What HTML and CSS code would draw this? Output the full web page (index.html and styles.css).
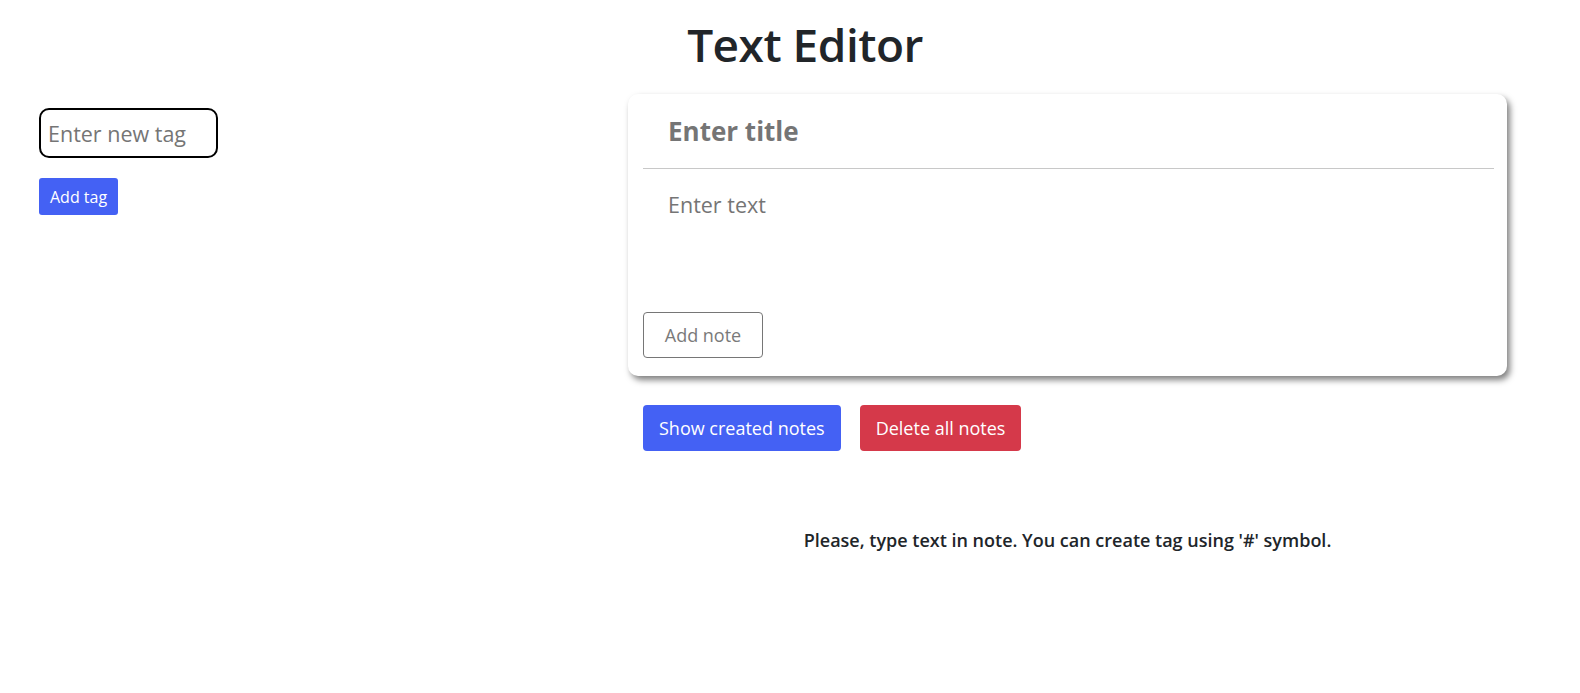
FILE: index.html
```html
<!DOCTYPE html>
<html lang="en">
<head>
<meta charset="utf-8">
<title>Text Editor</title>
<link rel="stylesheet" href="styles.css">
</head>
<body>
<h1 class="page-title">Text Editor</h1>
<main class="layout">
  <aside class="tags">
    <input class="tag-input" type="text" placeholder="Enter new tag">
    <button class="btn btn-primary btn-sm">Add tag</button>
  </aside>
  <section class="editor">
    <div class="card">
      <input class="note-title" type="text" placeholder="Enter title">
      <textarea class="note-text" placeholder="Enter text"></textarea>
      <button class="btn btn-outline">Add note</button>
    </div>
    <div class="actions">
      <button class="btn btn-primary">Show created notes</button>
      <button class="btn btn-danger">Delete all notes</button>
    </div>
    <p class="hint">Please, type text in note. You can create tag using '#' symbol.</p>
  </section>
</main>
</body>
</html>
```
FILE: styles.css
```css
* { box-sizing: border-box; }
body {
  margin: 0;
  font-family: "Open Sans", "Noto Sans", sans-serif;
  color: #212529;
  background: #fff;
}
.page-title {
  margin: 0;
  padding: 12px 0 0 30px;
  text-align: center;
  font-size: 46px;
  font-weight: 600;
  line-height: 64px;
  letter-spacing: -0.5px;
}
.layout {
  display: grid;
  grid-template-columns: 628px 879px;
  margin-top: 18px;
}
.tags {
  padding: 14px 0 0 39px;
  display: flex;
  flex-direction: column;
  align-items: flex-start;
  gap: 20px;
}
.tag-input {
  width: 179px;
  height: 50px;
  border: 2px solid #000;
  border-radius: 10px;
  padding: 0 7px;
  font-family: inherit;
  font-size: 21.5px;
  outline: none;
}
.tag-input::placeholder { color: #757575; }
.btn {
  font-family: inherit;
  border: 1px solid transparent;
  border-radius: 4px;
  cursor: pointer;
  padding: 0 15px;
  height: 46px;
  font-size: 18px;
  color: #fff;
}
.btn-sm {
  height: 37px;
  padding: 0 10px;
  font-size: 16px;
  border-radius: 3px;
}
.btn-primary { background: #4461f4; }
.btn-danger { background: #d5394a; }
.btn-outline {
  background: #fff;
  border-color: #767676;
  color: #7a7a7a;
  font-size: 18px;
  padding: 0;
  width: 120px;
  height: 46px;
}
.card {
  background: #fff;
  border-radius: 10px;
  padding: 15px 13px 18px 15px;
  box-shadow: 3px 4px 6px rgba(0, 0, 0, 0.5);
  display: flex;
  flex-direction: column;
  align-items: flex-start;
}
.note-title {
  width: 100%;
  height: 60px;
  border: none;
  border-bottom: 1px solid #c8c8c8;
  padding: 0 25px 16px;
  font-family: inherit;
  font-size: 26px;
  font-weight: 700;
  outline: none;
}
.note-title::placeholder { color: #757575; }
.note-text {
  width: 100%;
  height: 128px;
  border: none;
  resize: none;
  padding: 21px 25px;
  font-family: inherit;
  font-size: 21.5px;
  outline: none;
  margin-bottom: 15px;
}
.note-text::placeholder { color: #757575; }
.actions {
  display: flex;
  gap: 19px;
  padding-left: 15px;
  margin-top: 29px;
}
.hint {
  margin: 77px 0 0;
  text-align: center;
  font-size: 18px;
  font-weight: 600;
}
```
